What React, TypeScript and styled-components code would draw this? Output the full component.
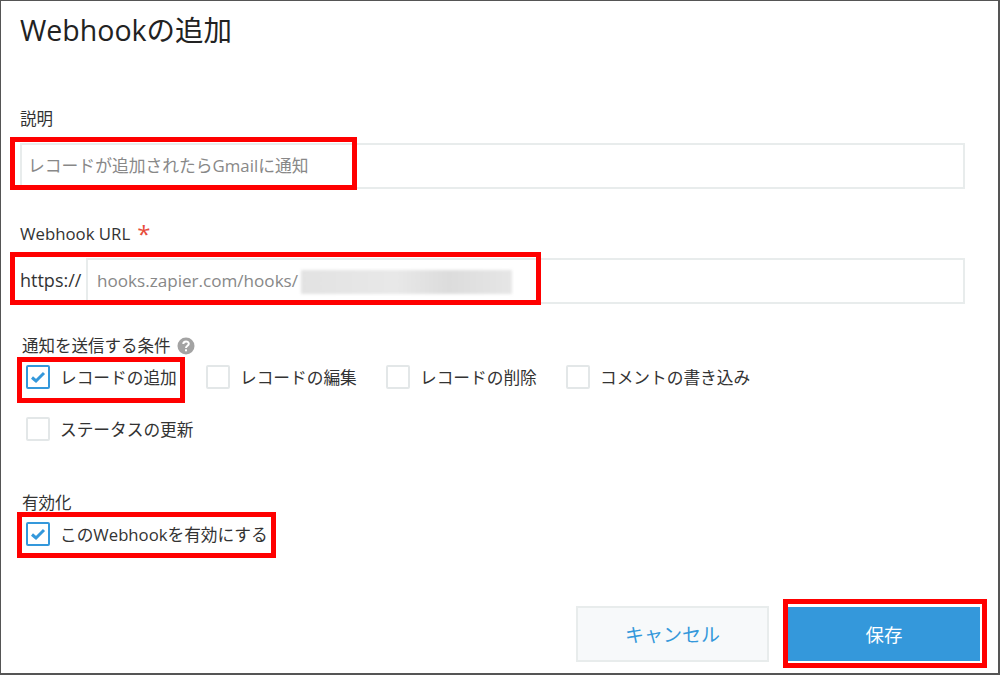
import React from "react";
import styled, { createGlobalStyle } from "styled-components";

const Global = createGlobalStyle`
  html, body { margin: 0; padding: 0; background: #fff; }
  * { box-sizing: border-box; }
`;

const FONT = `"Open Sans", "Noto Sans CJK JP", "Noto Sans", sans-serif`;

const Frame = styled.div`
  position: relative;
  width: 1000px;
  height: 675px;
  overflow: hidden;
  border: 1px solid #555;
  border-width: 1px 2px 2px 1px;
  background: #fff;
  font-family: ${FONT};
  color: #333;
  padding: 0 0 0 19px;
`;

const Title = styled.h1`
  margin: 11px 0 0;
  font-size: 28.5px;
  line-height: 36px;
  font-weight: 400;
  color: #222;
`;

const Label = styled.div<{ $top: number }>`
  display: flex;
  align-items: center;
  margin-top: ${(p) => p.$top}px;
  height: 20px;
  font-size: 16.5px;
  line-height: 20px;
  color: #333;
`;

const UrlLabel = styled(Label)`
  font-size: 16.8px;
`;

const GroupLabel = styled(Label)`
  padding-left: 2px;
`;

const InputRow = styled.div`
  display: flex;
  align-items: stretch;
  width: 945px;
  height: 46px;
  margin-top: 14px;
`;

const Prefix = styled.span`
  width: 66px;
  flex: none;
  font-size: 18px;
  line-height: 44px;
  color: #333;
`;

const Input = styled.div`
  position: relative;
  flex: 1;
  padding: 0 6px;
  border: 2px solid #e8ecec;
  font-size: 16.8px;
  line-height: 42px;
  color: #888;
  background: #fff;
  white-space: nowrap;
`;

const UrlInput = styled(Input)`
  padding: 0 9px;
  font-size: 17.1px;
`;

const Blur = styled.span`
  position: absolute;
  left: 213px;
  top: 10px;
  width: 211px;
  height: 24px;
  background: linear-gradient(90deg, #e2e2e2, #e8e8e8 45%, #dcdcdc 70%, #e6e6e6);
  filter: blur(1.5px);
`;

const Required = styled.span`
  margin-left: 7px;
  color: #e74c3c;
  font-size: 24px;
  line-height: 20px;
  height: 20px;
`;

const HelpIcon = styled.svg`
  margin-left: 6px;
  width: 18px;
  height: 18px;
`;

const CheckGroup = styled.div`
  display: flex;
  flex-wrap: wrap;
  width: 760px;
  margin-top: 2px;
  padding-left: 6px;
`;

const CheckItem = styled.label`
  display: flex;
  align-items: center;
  width: 180px;
  height: 52px;
  padding-bottom: 14px;
  font-size: 16.7px;
  color: #333;
  white-space: nowrap;
`;

const Box = styled.span<{ $on?: boolean }>`
  display: flex;
  align-items: center;
  justify-content: center;
  flex: none;
  width: 24px;
  height: 24px;
  margin-right: 10px;
  border: 2px solid ${(p) => (p.$on ? "#3498db" : "#e3e7e8")};
  border-radius: 2px;
  background: #fff;
`;

const Footer = styled.div`
  display: flex;
  justify-content: flex-end;
  gap: 19px;
  margin-top: 39px;
  padding-right: 18px;
`;

const Cancel = styled.button`
  width: 193px;
  height: 56px;
  padding: 0;
  border: 2px solid #e8ecec;
  background: #f7f9fa;
  color: #3498db;
  font-family: ${FONT};
  font-size: 19px;
`;

const Save = styled.button`
  width: 192px;
  height: 54px;
  padding: 0;
  margin-top: 1px;
  border: 0;
  background: #3498db;
  color: #fff;
  font-family: ${FONT};
  font-size: 18.5px;
`;

const Highlight = styled.div<{ $x: number; $y: number; $w: number; $h: number }>`
  position: absolute;
  left: ${(p) => p.$x - 1}px;
  top: ${(p) => p.$y - 1}px;
  width: ${(p) => p.$w}px;
  height: ${(p) => p.$h}px;
  border: 5px solid #f00;
  pointer-events: none;
`;

const Check = () => (
  <svg width="16" height="14" viewBox="0 0 16 14" aria-hidden="true">
    <path d="M2 7.5 L6 11 L14 3" fill="none" stroke="#3498db" strokeWidth="3" />
  </svg>
);

const Option = ({ on, children }: { on?: boolean; children: React.ReactNode }) => (
  <CheckItem>
    <Box $on={on}>{on && <Check />}</Box>
    {children}
  </CheckItem>
);

export default function App() {
  return (
    <Frame>
      <Global />
      <Title>Webhookの追加</Title>
      <Label $top={61}>説明</Label>
      <InputRow>
        <Input>レコードが追加されたらGmailに通知</Input>
      </InputRow>
      <UrlLabel $top={35}>
        Webhook URL<Required>*</Required>
      </UrlLabel>
      <InputRow>
        <Prefix>https://</Prefix>
        <UrlInput>
          hooks.zapier.com/hooks/
          <Blur />
        </UrlInput>
      </InputRow>
      <GroupLabel $top={32}>
        通知を送信する条件
        <HelpIcon viewBox="0 0 18 18" aria-hidden="true">
          <circle cx="9" cy="9" r="8.5" fill="#a3a3a3" />
          <path d="M6.3 7 C6.3 3.6 11.8 3.6 11.8 6.8 C11.8 8.8 9 8.8 9 11" fill="none" stroke="#fff" strokeWidth="2" />
          <rect x="8" y="12.3" width="2" height="2" fill="#fff" />
        </HelpIcon>
      </GroupLabel>
      <CheckGroup>
        <Option on>レコードの追加</Option>
        <Option>レコードの編集</Option>
        <Option>レコードの削除</Option>
        <Option>コメントの書き込み</Option>
        <Option>ステータスの更新</Option>
      </CheckGroup>
      <GroupLabel $top={31}>有効化</GroupLabel>
      <CheckGroup>
        <Option on>このWebhookを有効にする</Option>
      </CheckGroup>
      <Footer>
        <Cancel>キャンセル</Cancel>
        <Save>保存</Save>
      </Footer>
      <Highlight $x={10} $y={137} $w={347} $h={53} />
      <Highlight $x={10} $y={252} $w={531} $h={53} />
      <Highlight $x={17} $y={357} $w={168} $h={46} />
      <Highlight $x={17} $y={512} $w={259} $h={46} />
      <Highlight $x={783} $y={599} $w={204} $h={69} />
    </Frame>
  );
}
